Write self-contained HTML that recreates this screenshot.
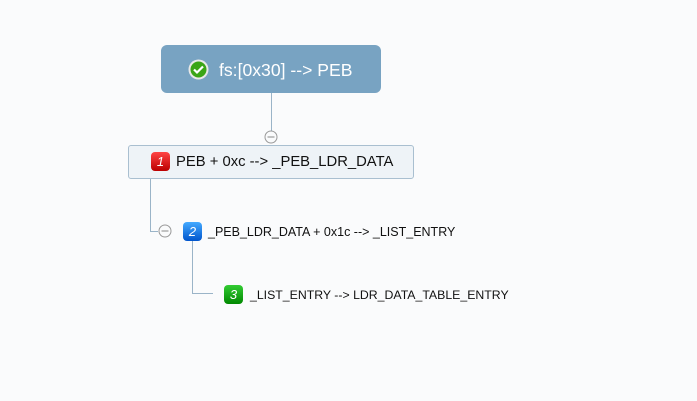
<!DOCTYPE html>
<html><head><style>
body{margin:0;width:697px;height:401px;background:#fafbfc;font-family:"Liberation Sans",sans-serif;position:relative;overflow:hidden}
.a{position:absolute}
.t{position:absolute;white-space:nowrap;color:#111}
.badge{position:absolute;width:19px;height:19px;border-radius:4px;color:#fff;font-style:italic;font-size:13px;text-align:center;line-height:19px}
</style></head><body>
<div class="a" style="left:161px;top:45px;width:220px;height:48px;background:#78a3c2;border-radius:6px"></div>
<svg class="a" style="left:188px;top:59px" width="21" height="21"><circle cx="10.5" cy="10.5" r="10" fill="#e8e8e8"/><circle cx="10.5" cy="10.5" r="8" fill="#3aa516"/><path d="M6 10.5l3 3 6-6" stroke="#fff" stroke-width="2.2" fill="none"/></svg>
<div class="t" style="left:219px;top:59px;font-size:17.6px;color:#fff;line-height:22px">fs:[0x30] --&gt; PEB</div>
<div class="a" style="left:271px;top:93px;width:1px;height:38px;background:#9ab4c8"></div>
<svg class="a" style="left:264px;top:130px" width="14" height="14"><circle cx="7" cy="7" r="6" fill="#fafbfc" stroke="#999"/><line x1="3.5" y1="7" x2="10.5" y2="7" stroke="#888"/></svg>
<div class="a" style="left:128px;top:145px;width:284px;height:32px;background:#eef3f7;border:1px solid #a9bfd0;border-radius:3px"></div>
<div class="badge" style="left:151px;top:152px;background:linear-gradient(#f44,#b00)">1</div>
<div class="t" style="left:176px;top:153px;font-size:14.8px;line-height:18px">PEB + 0xc --&gt; _PEB_LDR_DATA</div>
<div class="a" style="left:150px;top:179px;width:1px;height:52px;background:#9ab4c8"></div>
<div class="a" style="left:150px;top:231px;width:8px;height:1px;background:#9ab4c8"></div>
<svg class="a" style="left:158px;top:224px" width="14" height="14"><circle cx="7" cy="7" r="6" fill="#fafbfc" stroke="#999"/><line x1="3.5" y1="7" x2="10.5" y2="7" stroke="#888"/></svg>
<div class="badge" style="left:183px;top:222px;background:linear-gradient(#4af,#05c)">2</div>
<div class="t" style="left:208px;top:224px;font-size:12.5px;line-height:16px">_PEB_LDR_DATA + 0x1c --&gt; _LIST_ENTRY</div>
<div class="a" style="left:192px;top:241px;width:1px;height:52px;background:#9ab4c8"></div>
<div class="a" style="left:192px;top:293px;width:21px;height:1px;background:#9ab4c8"></div>
<div class="badge" style="left:224px;top:285px;background:linear-gradient(#3c3,#080)">3</div>
<div class="t" style="left:250px;top:287px;font-size:12.3px;line-height:16px">_LIST_ENTRY --&gt; LDR_DATA_TABLE_ENTRY</div>
</body></html>
